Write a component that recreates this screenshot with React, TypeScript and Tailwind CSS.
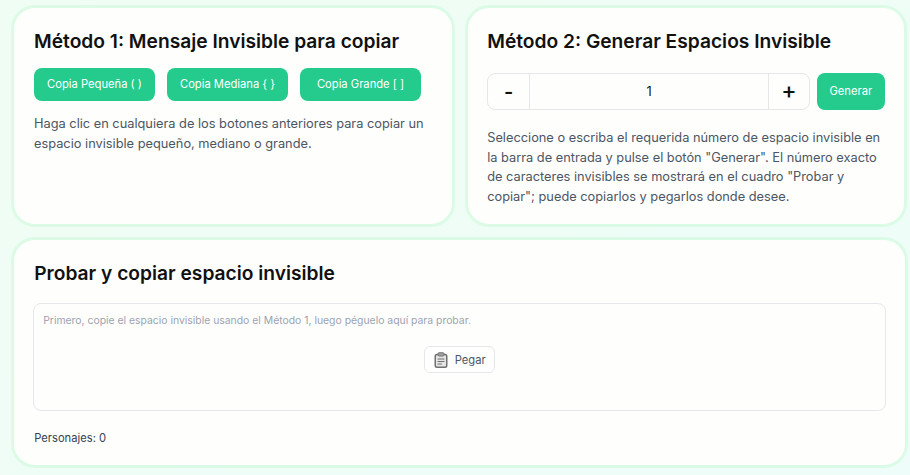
const btn = "h-[33px] w-[121px] rounded-lg bg-[#24cb8d] text-[11.2px] text-white";
const cardBase = "rounded-[24px] border-[3px] border-[#dcfbe6] bg-[#fefffd]";

function PasteIcon() {
  return (
    <svg width="14" height="16" viewBox="0 0 14 16" fill="none" aria-hidden="true">
      <rect x="1.25" y="2.5" width="11.5" height="12.75" rx="1.75" fill="#e5e5e5" stroke="#707070" strokeWidth="1.5" />
      <rect x="4" y="0.75" width="6" height="3.25" rx="1" fill="#a3a3a3" stroke="#707070" strokeWidth="1" />
      <path d="M4 7h6M4 9.5h6M4 12h3.5" stroke="#707070" strokeWidth="1.2" strokeLinecap="round" />
    </svg>
  );
}

export default function App() {
  return (
    <div className="h-[475px] w-[910px] overflow-hidden bg-linear-to-br from-[#f0fdf4] to-[#eefdf9] pl-[11px] pr-[2px] pt-[5px] font-['Inter',sans-serif] text-[#111111]">
      <div className="flex flex-col gap-[10px]">
        <div className="flex gap-[10px]">
          <section className={`${cardBase} h-[222px] w-[444px] px-[20px] pt-[19px]`}>
            <h2 className="text-[19.2px] leading-[28px] font-semibold">Método 1: Mensaje Invisible para copiar</h2>
            <div className="mt-[13px] flex gap-[12px]">
              <button className={btn}>Copia Pequeña ( )</button>
              <button className={btn}>Copia Mediana {"{ }"}</button>
              <button className={btn}>Copia Grande [ ]</button>
            </div>
            <p className="mt-[13px] text-[12.8px] leading-[19.5px] text-[#4b5563]">
              Haga clic en cualquiera de los botones anteriores para copiar un espacio invisible pequeño, mediano o grande.
            </p>
          </section>
          <section className={`${cardBase} h-[222px] w-[442px] px-[19.2px] pt-[19px]`}>
            <h2 className="text-[19.2px] leading-[28px] font-semibold">Método 2: Generar Espacios Invisible</h2>
            <div className="mt-[18px] flex gap-[7px]">
              <div className="flex h-[37px] w-[323px] rounded-lg border border-[#e5e7eb] text-[#111111]">
                <div className="flex w-[42px] items-center justify-center border-r border-[#e5e7eb] text-[20px] font-semibold">-</div>
                <div className="flex flex-1 items-center justify-center text-[12.8px]">1</div>
                <div className="flex w-[41px] items-center justify-center border-l border-[#e5e7eb] text-[23px] font-medium">+</div>
              </div>
              <button className="h-[37px] w-[68px] rounded-lg bg-[#24cb8d] text-[11.2px] text-white">Generar</button>
            </div>
            <p className="mt-[18px] text-[12.8px] leading-[19.5px] text-[#4b5563]">
              Seleccione o escriba el requerida número de espacio invisible en la barra de entrada y pulse el botón "Generar". El número exacto de caracteres invisibles se mostrará en el cuadro "Probar y copiar"; puede copiarlos y pegarlos donde desee.
            </p>
          </section>
        </div>
        <section className={`${cardBase} h-[231px] w-[897px] px-[19.2px] pt-[19px]`}>
          <h2 className="ml-px text-[19.2px] leading-[28px] font-semibold">Probar y copiar espacio invisible</h2>
          <div className="relative mt-[16px] h-[108px] rounded-lg border border-[#e5e7eb] px-[9px] py-[10px] text-[10.4px] leading-[14px] text-[#9ca3af]">
            Primero, copie el espacio invisible usando el Método 1, luego péguelo aquí para probar.
            <button className="absolute left-[390px] top-[42px] flex h-[27px] w-[71px] items-center justify-center gap-[7px] rounded-md border border-[#e5e7eb] bg-white text-[11.2px] text-[#4b5563]">
              <PasteIcon />
              Pegar
            </button>
          </div>
          <p className="ml-px mt-[19px] text-[11.2px] leading-[16px] text-[#374151]">Personajes: 0</p>
        </section>
      </div>
    </div>
  );
}
